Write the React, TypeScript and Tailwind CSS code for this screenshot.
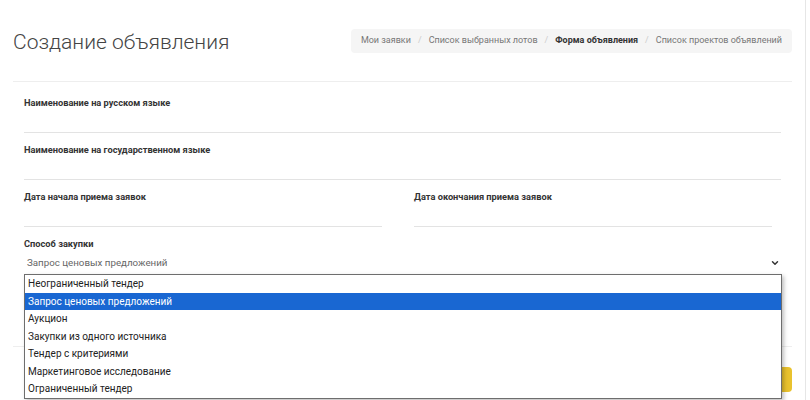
import { ChevronDown } from "lucide-react";

const crumbs = [
  { label: "Мои заявки" },
  { label: "Список выбранных лотов" },
  { label: "Форма объявления", active: true },
  { label: "Список проектов объявлений" },
];

const methods = [
  "Неограниченный тендер",
  "Запрос ценовых предложений",
  "Аукцион",
  "Закупки из одного источника",
  "Тендер с критериями",
  "Маркетинговое исследование",
  "Ограниченный тендер",
];

function Field({ label, className = "" }: { label: string; className?: string }) {
  return (
    <div className={className}>
      <div className="text-[9.25px] leading-[14px] font-bold text-[#333]">{label}</div>
      <div className="h-[23px] border-b border-[#e3e3e3]" />
    </div>
  );
}

export default function App() {
  return (
    <div className="relative w-[810px] h-[400px] overflow-hidden bg-white font-['Roboto',sans-serif]">
      <div className="w-[806px] h-full border-r border-[#e6e6e6] px-[13px]">
        {/* header */}
        <div className="flex items-center justify-between h-[81px]">
          <h1 className="pt-[2px] text-[21px] leading-[26px] font-light text-[#444]">Создание объявления</h1>
          <nav className="flex items-center h-[24px] px-[10px] rounded bg-[#f5f5f5] text-[9px]">
            {crumbs.map((c, i) => (
              <span key={c.label} className="flex items-center">
                {i > 0 && <span className="px-[7px] text-[#ccc]">/</span>}
                <span className={c.active ? "font-bold text-[#333]" : "text-[#777]"}>{c.label}</span>
              </span>
            ))}
          </nav>
        </div>

        <div className="border-t border-[#eee] px-[11px] pt-[14px] pb-[71px] flex flex-col gap-[10px]">
          <Field label="Наименование на русском языке" />
          <Field label="Наименование на государственном языке" />
          <div className="flex gap-[32px]">
            <Field label="Дата начала приема заявок" className="w-[358px]" />
            <Field label="Дата окончания приема заявок" className="w-[358px]" />
          </div>
          <div>
            <div className="text-[9.25px] leading-[14px] font-bold text-[#333]">Способ закупки</div>
            <div className="relative flex items-center justify-between h-[24px] pl-[3px] pr-[1px] text-[9.75px] text-[#666]">
              <span>Запрос ценовых предложений</span>
              <ChevronDown size={10} strokeWidth={3.5} className="text-[#333]" />
              {/* opened options list */}
              <ul className="absolute left-0 top-[23px] w-[758px] bg-white border border-[#6e6e6e] shadow-[2px_2px_4px_rgba(0,0,0,0.25)] text-[10px] text-[#222]">
                {methods.map((m, i) => (
                  <li
                    key={m}
                    className={
                      "h-[17.5px] leading-[17.5px] pl-[3px] " +
                      (i === 1 ? "bg-[#1967d2] text-white" : "")
                    }
                  >
                    {m}
                  </li>
                ))}
              </ul>
            </div>
          </div>
        </div>

        <div className="border-t border-[#eee] pt-[20px] flex justify-end">
          <button className="h-[25px] w-[120px] rounded-sm bg-[#e9c22e] text-[12px] text-[#333]">Далее</button>
        </div>
      </div>
    </div>
  );
}
